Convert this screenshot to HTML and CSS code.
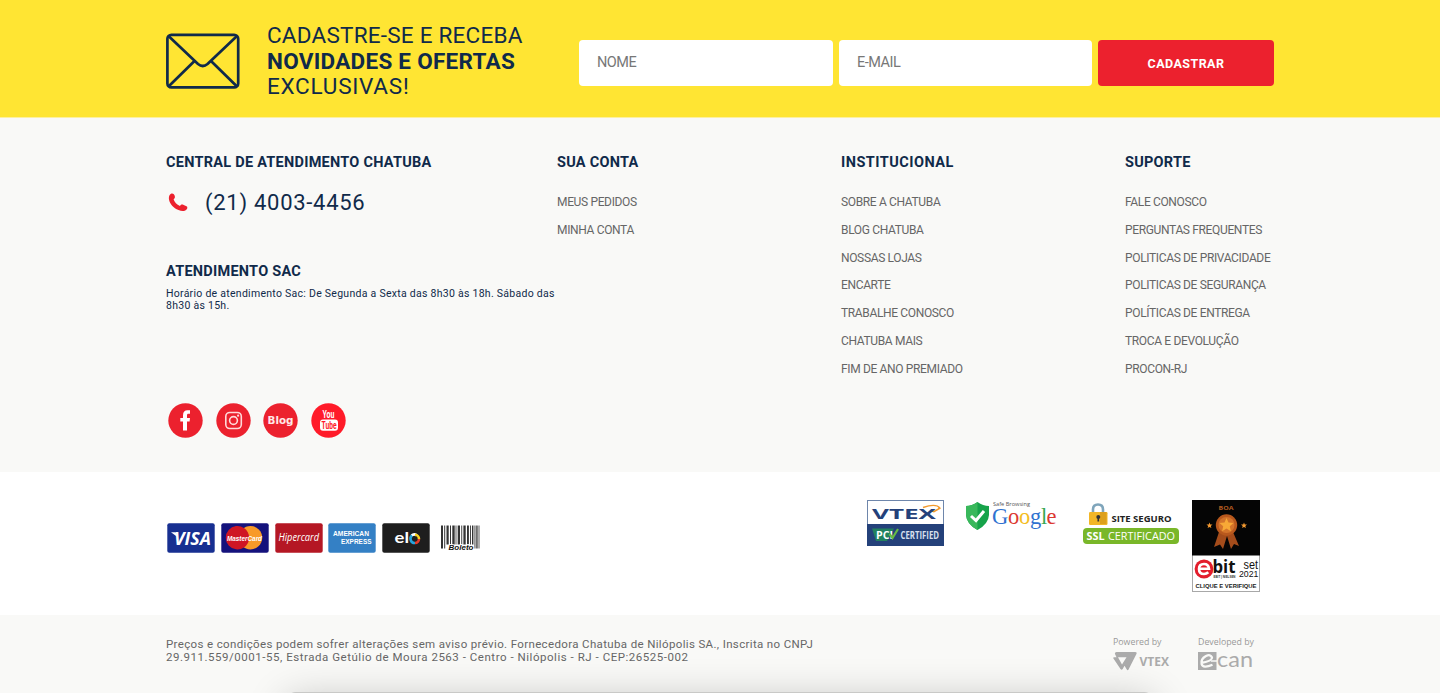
FILE: index.html
```html
<!DOCTYPE html>
<html lang="pt-BR">
<head>
<meta charset="utf-8">
<title>Chatuba</title>
<link rel="stylesheet" href="styles.css">
</head>
<body>
<section class="newsletter">
  <div class="container newsletter-row">
    <svg class="envelope" width="74" height="56" viewBox="0 0 74 56" fill="none" stroke="#102a4a" stroke-width="2.700" stroke-linejoin="round">
      <rect x="1.400" y="1.800" width="70.800" height="52.600" rx="4"/>
      <path d="M2.500 3L32 31Q36.800 35 41.500 31L71 3M28.500 28L2.500 53.500M45 28L71 53.500"/>
    </svg>
    <h2 class="pitch"><span class="p1">CADASTRE-SE E RECEBA</span><strong class="p2">NOVIDADES E OFERTAS</strong><span class="p3">EXCLUSIVAS!</span></h2>
    <form class="signup">
      <input class="field name" type="text" placeholder="NOME">
      <input class="field mail" type="text" placeholder="E-MAIL">
      <button class="send" type="button">CADASTRAR</button>
    </form>
  </div>
</section>

<section class="links">
  <div class="container columns">
    <div class="contact">
      <h3 class="title t-central">CENTRAL DE ATENDIMENTO CHATUBA</h3>
      <div class="phone">
        <svg width="20" height="19" viewBox="0 0 20 19"><path fill="#ec212e" d="M3 .7C4.500-.1 6 .7 6.600 2.500C7.200 4.400 6.900 5.300 5.600 6.200C6.400 9 8.800 11.600 12 13C13 11.400 14 11.100 15.700 11.900L18.500 13.300C19.700 14 19.500 15.400 18.500 16.500C16.700 18.400 13.800 18.500 10.500 17.100C5.500 14.900 1.800 11 1 6.500C.6 3.900 1.200 1.700 3 .7Z"/></svg>
        <span>(21) 4003-4456</span>
      </div>
      <h3 class="title t-sac">ATENDIMENTO SAC</h3>
      <p class="hours">Horário de atendimento Sac: De Segunda a Sexta das 8h30 às 18h. Sábado das<br>8h30 às 15h.</p>
      <div class="social">
        <svg width="35" height="35" viewBox="0 0 35 35"><circle cx="17.500" cy="17.500" r="17.200" fill="#ec212e"/><path fill="#fff" d="M15 27.500V18.600H12.300V15H15V12.400C15 9 16.700 7.300 19.500 7.300H22V10.800H20.500C19.300 10.800 19 11.300 19 12.500V15H22L21.600 18.600H19V27.500Z"/></svg>
        <svg width="35" height="35" viewBox="0 0 35 35"><circle cx="17.500" cy="17.500" r="17.200" fill="#ec212e"/><g fill="none" stroke="#ffd9d9" stroke-width="1.600"><rect x="9.800" y="9.500" width="15.500" height="16" rx="4"/><circle cx="17.500" cy="17.500" r="3.900"/></g><circle cx="22.100" cy="12.700" r="1.100" fill="#ffd9d9"/></svg>
        <svg width="35" height="35" viewBox="0 0 35 35"><circle cx="17.500" cy="17.500" r="17.200" fill="#ec212e"/><text class="blog" x="4.500" y="20.500" textLength="26" lengthAdjust="spacingAndGlyphs">Blog</text></svg>
        <svg width="35" height="35" viewBox="0 0 35 35"><circle cx="17.500" cy="17.500" r="17.200" fill="#ff1b29"/><text class="you" x="11.500" y="14.500" textLength="12" lengthAdjust="spacingAndGlyphs">You</text><rect x="9" y="16.400" width="18" height="11.400" rx="3" fill="#fff"/><text class="tube" x="10.500" y="25.800" textLength="15" lengthAdjust="spacingAndGlyphs">Tube</text></svg>
      </div>
    </div>
    <div class="col">
      <h3 class="title t-conta">SUA CONTA</h3>
      <ul class="menu"><li>MEUS PEDIDOS</li><li>MINHA CONTA</li></ul>
    </div>
    <div class="col">
      <h3 class="title t-inst">INSTITUCIONAL</h3>
      <ul class="menu"><li>SOBRE A CHATUBA</li><li>BLOG CHATUBA</li><li>NOSSAS LOJAS</li><li>ENCARTE</li><li>TRABALHE CONOSCO</li><li>CHATUBA MAIS</li><li>FIM DE ANO PREMIADO</li></ul>
    </div>
    <div class="col">
      <h3 class="title t-sup">SUPORTE</h3>
      <ul class="menu"><li>FALE CONOSCO</li><li>PERGUNTAS FREQUENTES</li><li>POLITICAS DE PRIVACIDADE</li><li>POLITICAS DE SEGURANÇA</li><li>POLÍTICAS DE ENTREGA</li><li>TROCA E DEVOLUÇÃO</li><li>PROCON-RJ</li></ul>
    </div>
  </div>
</section>

<section class="badges">
  <div class="container badges-row">
    <div class="cards">
      <svg width="48" height="30" viewBox="0 0 48 30"><rect x=".3" y=".3" width="47.400" height="29.400" rx="2" fill="#172f91"/><path fill="#fff" d="M4 9.200H8.500L10.500 12V14Z"/><text class="visa" x="7" y="22" textLength="37" lengthAdjust="spacingAndGlyphs">VISA</text></svg>
      <svg width="48" height="30" viewBox="0 0 48 30"><rect x=".3" y=".3" width="47.400" height="29.400" rx="2" fill="#14127c"/><circle cx="29.500" cy="14.700" r="11.700" fill="#f89a28"/><path fill="#cf1624" d="M23 5A11.700 11.700 0 1 0 23 24.400A11.700 11.700 0 0 0 23 5Z"/><text class="master" x="6" y="18" textLength="35" lengthAdjust="spacingAndGlyphs">MasterCard</text></svg>
      <svg width="48" height="30" viewBox="0 0 48 30"><rect x=".3" y=".3" width="47.400" height="29.400" rx="2" fill="#b51724"/><text class="hiper" x="3.500" y="18.200" textLength="40.500" lengthAdjust="spacingAndGlyphs">Hipercard</text></svg>
      <svg width="48" height="30" viewBox="0 0 48 30"><rect x=".3" y=".3" width="47.400" height="29.400" rx="2" fill="#3480c5"/><text class="amex" x="5" y="13.300" textLength="36" lengthAdjust="spacingAndGlyphs">AMERICAN</text><text class="amex" x="13" y="21.300" textLength="30.500" lengthAdjust="spacingAndGlyphs">EXPRESS</text></svg>
      <svg width="48" height="30" viewBox="0 0 48 30"><rect x=".3" y=".3" width="47.400" height="29.400" rx="2" fill="#1e1e1e"/><text class="elo" x="12.500" y="19.800" textLength="14.500" lengthAdjust="spacingAndGlyphs">el</text><g fill="none" stroke-width="2.600"><path d="M29.500 12.500A4.200 4.200 0 0 1 34.800 12.300" stroke="#fff"/><path d="M33 11.700A4.200 4.200 0 0 1 37 16" stroke="#fbd21e"/><path d="M37 16A4.200 4.200 0 0 1 33 20" stroke="#e73a27"/><path d="M33 20A4.200 4.200 0 0 1 30 12.600" stroke="#25a4dd"/></g></svg>
      <svg class="boleto-card" width="42" height="30" viewBox="0 0 42 30"><g fill="#333"><path d="M1 2.500h2v23h-2zM4.200 2.500h1v23h-1zM6.500 2.500h2.200v19h-2.200zM10 2.500h1v19h-1zM12.300 2.500h2.400v19h-2.400zM15.600 2.500h.8v19h-.8zM17.700 2.500h2.300v19h-2.300zM21.300 2.500h.9v19h-.9zM23.400 2.500h2.300v19h-2.300zM27 2.500h1.900v19h-1.900zM30 2.500h.9v19h-.9zM32 2.500h1.400v19h-1.400zM34.500 2.500h.9v23h-.9zM36.300 2.500h1.300v23h-1.300zM38.600 2.500h.8v23h-.8z"/></g><text class="boleto" x="8.500" y="26.600" textLength="25" lengthAdjust="spacingAndGlyphs">Boleto</text></svg>
    </div>
    <div class="seals">
      <svg class="pci" width="77" height="46" viewBox="0 0 77 46"><rect x=".5" y=".5" width="76" height="45" fill="#fff" stroke="#6e86ab"/><rect y="24" width="77" height="22" fill="#24417a"/><path d="M56 7.500Q69 3 73 8" fill="none" stroke="#f39a2d" stroke-width="1.500"/><path d="M74 8.500L67 12.500L64 11.500Q70 10 72 7Z" fill="#f39a2d"/><text class="vtex" x="5" y="18.700" textLength="64" lengthAdjust="spacingAndGlyphs">VTEX</text><path d="M5 28.500H27L20 41H9Z" fill="#22815f"/><text class="pcitxt" x="9" y="39" textLength="17" lengthAdjust="spacingAndGlyphs">PCI</text><path d="M22.500 34L25.500 38L31 29" fill="none" stroke="#65bb45" stroke-width="2.200"/><text class="cert" x="33.500" y="38.800" textLength="38.500" lengthAdjust="spacingAndGlyphs">CERTIFIED</text></svg>
      <svg class="google" width="94" height="32" viewBox="0 0 94 32"><path fill="#16a34a" d="M12.500 2Q18 6 24 6V15Q23.500 24 12.500 30Q1.500 24 1 15V6Q7 6 12.500 2Z"/><path fill="#39b85b" d="M12.500 2V30Q1.500 24 1 15V6Q7 6 12.500 2Z"/><path d="M6 16L11 20.500L19 11" fill="none" stroke="#fff" stroke-width="3"/><text class="safe" x="28" y="5.800" textLength="37" lengthAdjust="spacingAndGlyphs">Safe Browsing</text><text class="goog" y="24" x="27"><tspan fill="#2f72d0">G</tspan><tspan fill="#dc3932" x="43">o</tspan><tspan fill="#f4bd22" x="54">o</tspan><tspan fill="#2f72d0" x="65">g</tspan><tspan fill="#35a851" x="76">l</tspan><tspan fill="#dc3932" x="81.500">e</tspan></text></svg>
      <svg class="ssl" width="98" height="44" viewBox="0 0 98 44"><path d="M11 14V9.500Q11 4.500 16 4.500T21 9.500V14" fill="none" stroke="#7fa5bb" stroke-width="2.600"/><rect x="7" y="12" width="18.500" height="13" rx="1.200" fill="#f2b626"/><path d="M18 12H24.500V24H18Z" fill="#dda01d"/><circle cx="16.300" cy="16.900" r="2" fill="#333"/><path d="M15.600 17H17L17.200 21.500H15.400Z" fill="#333"/><text class="site" x="29.500" y="22" textLength="60" lengthAdjust="spacingAndGlyphs">SITE SEGURO</text><rect x="1" y="28" width="96" height="16" rx="4" fill="#79b729"/><text class="sslb" x="4.500" y="40.300" textLength="18" lengthAdjust="spacingAndGlyphs">SSL</text><text class="sslc" x="26" y="40.300" textLength="67" lengthAdjust="spacingAndGlyphs">CERTIFICADO</text></svg>
      <svg class="ebit" width="68" height="92" viewBox="0 0 68 92"><rect x=".5" y=".5" width="67" height="91" fill="#fff" stroke="#a8a8a8"/><rect width="68" height="55.500" fill="#050505"/><text class="boa" x="26.500" y="10" textLength="15" lengthAdjust="spacingAndGlyphs">BOA</text><path fill="#a44c1b" d="M27 32L22 47L28 44.500L31 49L35 36L39 49L42 44L47 46L41 32Z"/><circle cx="34.500" cy="25" r="10.700" fill="#b8581d"/><circle cx="34.500" cy="25" r="8" fill="#d3742b"/><path fill="#f7a936" d="M34.500 18L36.500 22.500L41.500 23L37.800 26.300L38.900 31.200L34.500 28.600L30.100 31.200L31.200 26.300L27.500 23L32.500 22.500Z"/><g fill="#f49a31"><path d="M17.500 22.500L18.300 24.500L20.500 24.600L18.800 26L19.400 28L17.500 26.900L15.600 28L16.200 26L14.500 24.600L16.700 24.500Z"/><path d="M52 22.500L52.800 24.500L55 24.600L53.300 26L53.900 28L52 26.900L50.100 28L50.700 26L49 24.600L51.200 24.500Z"/></g><circle cx="12" cy="69" r="9.400" fill="#e31d2c"/><path d="M7.300 68.800H17Q16.500 64 12 64Q7 64 7 69T12 74Q14.500 74 16.300 72.300" fill="none" stroke="#fff" stroke-width="2.600"/><text class="bit" x="20.500" y="73.300" textLength="23" lengthAdjust="spacingAndGlyphs">bit</text><text class="niel" x="21.500" y="77.500" textLength="22" lengthAdjust="spacingAndGlyphs">EBIT | NIELSEN</text><text class="set" x="51.500" y="68.700" textLength="14.500" lengthAdjust="spacingAndGlyphs">set</text><text class="year" x="47" y="77" textLength="19.500" lengthAdjust="spacingAndGlyphs">2021</text><text class="click" x="3.500" y="88" textLength="61" lengthAdjust="spacingAndGlyphs">CLIQUE E VERIFIQUE</text></svg>
    </div>
  </div>
</section>

<footer class="legal">
  <div class="container legal-row">
    <p class="terms"><span class="l1">Preços e condições podem sofrer alterações sem aviso prévio. Fornecedora Chatuba de Nilópolis SA., Inscrita no CNPJ</span><span class="l2">29.911.559/0001-55, Estrada Getúlio de Moura 2563 - Centro - Nilópolis - RJ - CEP:26525-002</span></p>
    <svg class="powered" width="58" height="36" viewBox="0 0 58 36"><text class="credit" x="0" y="9" textLength="48.500" lengthAdjust="spacingAndGlyphs">Powered by</text><path fill="#ababab" fill-rule="evenodd" d="M3.500 16H22Q24.500 16 23.300 18.300L15.800 33Q14.700 35.500 13.500 33L11.500 29.700L9.700 33Q8.600 34.500 7.500 33L.4 22.500Q-.3 21.200 1.300 21.200H3.500L2 18Q1.500 16.200 3.500 16ZM5 21.200L9 28.500L13.500 21.200Z"/><text class="vt" x="26.500" y="30" textLength="29.500" lengthAdjust="spacingAndGlyphs">VTEX</text></svg>
    <svg class="developed" width="58" height="36" viewBox="0 0 58 36"><text class="credit" x="0" y="9" textLength="56" lengthAdjust="spacingAndGlyphs">Developed by</text><rect y="16" width="18.500" height="18" fill="#ababab"/><path d="M3 27Q14.500 25 14 21.500Q12.500 17.800 8 20Q2.500 23 3.600 28Q5 33 14.500 28.800" fill="none" stroke="#f9f9f7" stroke-width="2.300"/><path d="M13 25H20" stroke="#f9f9f7" stroke-width="1.500"/><text class="can" x="19" y="31" textLength="36" lengthAdjust="spacingAndGlyphs">can</text></svg>
  </div>
  <div class="tray"></div>
</footer>
</body>
</html>
```
FILE: styles.css
```css
* { box-sizing: border-box; margin: 0; padding: 0; }
body { font-family: Roboto, "Noto Sans", sans-serif; background: #fff; color: #102a4a; height: 693px; overflow: hidden; }
svg { display: block; flex: none; }
.container { width: 1108px; margin-left: 166px; }

.newsletter { height: 118px; background: #ffe533; border-bottom: 1px solid #fdf0a0; }
.newsletter-row { display: flex; align-items: flex-start; }
.envelope { margin-top: 33px; }
.pitch { width: 312px; margin-left: 27px; padding-top: 23px; font-size: 22.500px; line-height: 25.500px; white-space: nowrap; display: flex; flex-direction: column; }
.p1 { letter-spacing: .23px; font-weight: 400; }
.p2 { letter-spacing: .27px; font-weight: 700; }
.p3 { letter-spacing: .75px; font-weight: 400; }
.signup { display: grid; grid-template-columns: 254px 253px 176px; gap: 6px; margin-top: 40px; }
.field { height: 46px; width: 100%; border: 0; border-radius: 4px; background: #fff; padding: 0 18px 2px; font: 14.500px Roboto, sans-serif; letter-spacing: -.5px; }
.field::placeholder { color: #777; opacity: 1; }
.send { border: 0; border-radius: 4px; background: #ec212e; color: #fff; font: 700 12.500px Roboto, sans-serif; letter-spacing: .45px; }

.links { height: 354px; background: #f9f9f7; }
.columns { display: grid; grid-template-columns: 391px 284px 284px 149px; padding-top: 35px; white-space: nowrap; }
.title { font-size: 14.500px; line-height: 20px; font-weight: 700; letter-spacing: .26px; }
.t-inst { letter-spacing: .48px; }
.phone { display: flex; align-items: center; height: 36px; margin-top: 11px; padding-left: 2px; font-size: 22px; letter-spacing: .72px; }
.phone span { margin-left: 17px; }
.t-sac { margin-top: 41.500px; }
.hours { margin-top: 6.500px; font-size: 10.500px; line-height: 12px; letter-spacing: .27px; }
.social { display: flex; gap: 12.400px; margin-top: 90.500px; padding-left: 2.400px; }
.blog { font: 700 10.500px "DejaVu Sans", sans-serif; fill: #ffe8e8; }
.you { font: 700 10.500px Roboto, sans-serif; fill: #fff; }
.tube { font: 700 10px Roboto, sans-serif; fill: #ff1b29; }
.menu { list-style: none; margin-top: 16px; font-size: 12px; line-height: 27.750px; color: #666; letter-spacing: -.35px; }

.badges { height: 143px; background: #fff; }
.badges-row { display: flex; }
.cards { display: flex; gap: 5.800px; width: 701px; padding: 51px 0 0 1px; }
.boleto-card { margin-left: 4px; }
.visa { font: italic 700 18px "Open Sans", sans-serif; fill: #fff; }
.master { font: italic 700 8px "Liberation Sans", sans-serif; fill: #fff; }
.hiper { font: italic 500 10px "Open Sans", sans-serif; fill: #fff; }
.amex { font: 700 6.800px "Liberation Sans", sans-serif; fill: #fff; }
.elo { font: 700 15.500px Lato, sans-serif; fill: #fff; }
.boleto { font: italic 700 8px "Liberation Sans", sans-serif; fill: #111; stroke: #fff; stroke-width: 1.500px; paint-order: stroke; }
.seals { display: flex; align-items: flex-start; padding-top: 28px; }
.google { margin-left: 21px; }
.ssl { margin-left: 23px; }
.ebit { margin-left: 12px; }
.vtex { font: 700 15px "Open Sans", sans-serif; fill: #24417a; }
.pcitxt { font: 700 10.500px "Open Sans", sans-serif; fill: #fff; }
.cert { font: 700 10px "Open Sans", sans-serif; fill: #d8e0ee; }
.safe { font: 6px "Open Sans", sans-serif; fill: #555; }
.goog { font: 22.500px "Liberation Serif", serif; }
.site { font: 700 9.500px "Open Sans", sans-serif; fill: #222; }
.sslb { font: 700 11px "Open Sans", sans-serif; fill: #fff; }
.sslc { font: 11px "Open Sans", sans-serif; fill: #fff; }
.boa { font: 700 6px "Open Sans", sans-serif; fill: #b25a20; }
.bit { font: 700 18px "Open Sans", sans-serif; fill: #111; }
.niel { font: 700 3.500px "Liberation Sans", sans-serif; fill: #333; }
.set { font: 12px "Liberation Sans", sans-serif; fill: #111; }
.year { font: 9px "Liberation Sans", sans-serif; fill: #111; }
.click { font: 700 6px "Liberation Sans", sans-serif; fill: #222; }

.legal { position: relative; height: 78px; background: #f9f9f7; overflow: hidden; }
.legal-row { display: flex; padding-top: 21px; }
.terms { display: flex; flex-direction: column; width: 947.400px; padding-top: 2px; font-size: 11.500px; line-height: 13px; color: #666; white-space: nowrap; }
.l1 { letter-spacing: .355px; }
.l2 { letter-spacing: .53px; }
.developed { margin-left: 26.600px; }
.credit { font: 9px "Open Sans", sans-serif; fill: #999; }
.vt { font: 700 11.500px "Open Sans", sans-serif; fill: #ababab; }
.can { font: 22px Lato, sans-serif; fill: #ababab; }
/* Docked panel whose shadow spills over the bottom of the page */
.tray { position: absolute; left: 286px; top: 76.500px; width: 868px; height: 60px; border-radius: 10px; background: #c9c9c7; box-shadow: 0 8px 40px rgba(0, 0, 0, .24); pointer-events: none; }
```
